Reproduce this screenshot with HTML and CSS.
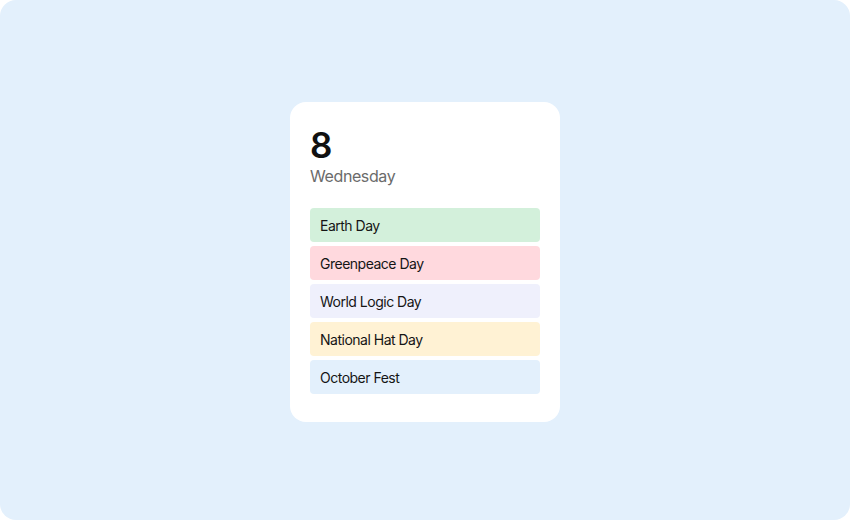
FILE: index.html
```html
<!DOCTYPE html>
<html>
<head>
<meta charset="utf-8">
<link rel="stylesheet" href="styles.css">
</head>
<body>
<div class="stage">
  <div class="card">
    <div class="date">8</div>
    <div class="weekday">Wednesday</div>
    <ul class="events">
      <li class="event green">Earth Day</li>
      <li class="event pink">Greenpeace Day</li>
      <li class="event lavender">World Logic Day</li>
      <li class="event yellow">National Hat Day</li>
      <li class="event blue">October Fest</li>
    </ul>
  </div>
</div>
</body>
</html>
```

FILE: styles.css
```css
* { box-sizing: border-box; }
html, body { margin: 0; padding: 0; background: #ffffff; }
body { font-family: Inter, "Noto Sans", sans-serif; }
.stage {
  width: 850px;
  height: 520px;
  background: #e3f0fc;
  border-radius: 16px;
  display: flex;
  align-items: center;
  justify-content: center;
  padding-top: 4px;
}
.card {
  width: 270px;
  height: 320px;
  background: #ffffff;
  border-radius: 16px;
  padding: 22px 20px 28px;
}
.date {
  font-size: 35px;
  font-weight: 600;
  line-height: 42px;
  color: #111111;
  letter-spacing: -0.5px;
}
.weekday {
  font-size: 16px;
  line-height: 20px;
  color: #6b6b6b;
  letter-spacing: -0.4px;
}
.events {
  list-style: none;
  margin: 22px 0 0;
  padding: 0;
  display: flex;
  flex-direction: column;
  gap: 4px;
}
.event {
  height: 34px;
  border-radius: 4px;
  padding: 0 10px;
  display: flex;
  align-items: center;
  font-size: 14px;
  color: #151515;
  letter-spacing: -0.5px;
}
.green { background: #d3f0db; }
.pink { background: #ffd9de; }
.lavender { background: #eff0fc; }
.yellow { background: #fff2d4; }
.blue { background: #e3f0fc; }
```
